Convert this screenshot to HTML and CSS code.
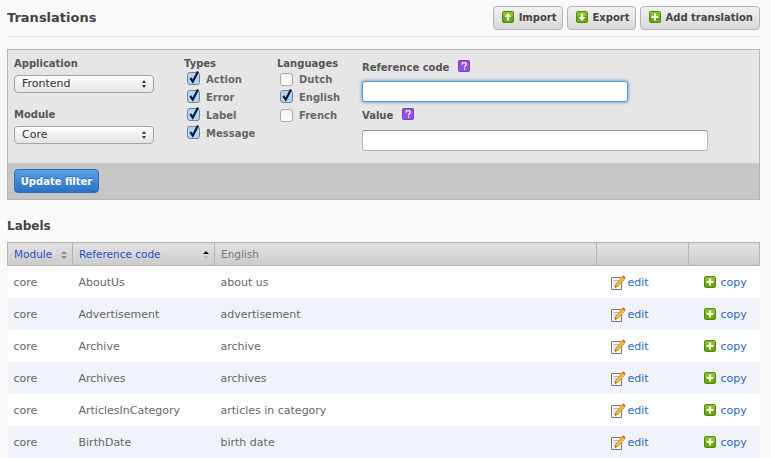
FILE: index.html
```html
<!DOCTYPE html>
<html lang="en">
<head>
  <meta charset="UTF-8">
  <title>Translations</title>
  <link rel="stylesheet" href="styles.css">
</head>
<body>

  <svg class="defs" width="0" height="0">
    <symbol id="green" viewBox="0 0 12 12">
      <rect x="0.5" y="0.5" width="11" height="11" rx="1.5" fill="#67a90f" stroke="#4f8a0a"/>
      <rect x="1" y="1" width="10" height="4" rx="1" fill="#86c523"/>
    </symbol>
    <symbol id="add" viewBox="0 0 12 12">
      <use href="#green" width="12" height="12"/>
      <path d="M5 2.5h2V5h2.5v2H7v2.5H5V7H2.5V5H5z" fill="#fff"/>
    </symbol>
    <symbol id="up" viewBox="0 0 12 12">
      <use href="#green" width="12" height="12"/>
      <path d="M6 2l3.5 3.8H7.2v3.7H4.8V5.800H2.500z" fill="#fff"/>
    </symbol>
    <symbol id="down" viewBox="0 0 12 12">
      <use href="#green" width="12" height="12"/>
      <path d="M6 10L2.500 6.200h2.300V2.500h2.400v3.700h2.300z" fill="#fff"/>
    </symbol>
    <symbol id="help" viewBox="0 0 12 12">
      <rect x="0.5" y="0.5" width="11" height="11" rx="1" fill="#9350dc" stroke="#7a3cc0"/>
      <path d="M4 4.500c0-2.400 4.200-2.400 4.200 0 0 1.500-1.600 1.500-1.600 2.700M6.600 8.300v1.400" fill="none" stroke="#fff" stroke-width="1.300"/>
    </symbol>
    <symbol id="tick" viewBox="0 0 14 15">
      <rect x="0.500" y="2.500" width="12" height="12" rx="2.500" fill="#b4d6f4" stroke="#6d87a3"/>
      <path d="M3.300 8l2.500 3.600L11 1.500" fill="none" stroke="#111d33" stroke-width="2.200"/>
    </symbol>
    <symbol id="pencil" viewBox="0 0 16 16">
      <path d="M1.500 2.500h10v12h-10z" fill="#fbfbfb" stroke="#777"/>
      <path d="M3.500 5.500h6M3.500 8h4M3.500 10.500h3" stroke="#b5b5b5"/>
      <path d="M5 12.500l1-3.500 6.500-7.500 2.500 2L8.500 11z" fill="#f4b73c" stroke="#c47f1a" stroke-width="0.700"/>
      <path d="M12.300 1.500l1-1 2.200 1.800-.8 1.200z" fill="#d5405c"/>
      <path d="M5 12.500l.5-1.800 1.300 1z" fill="#333"/>
    </symbol>
  </svg>

  <div class="page-head">
    <h1>Translations</h1>
    <div class="actions">
      <a class="btn" href="#"><svg class="icon"><use href="#up"/></svg>Import</a>
      <a class="btn" href="#"><svg class="icon"><use href="#down"/></svg>Export</a>
      <a class="btn" href="#"><svg class="icon"><use href="#add"/></svg>Add translation</a>
    </div>
  </div>

  <form class="filter">
    <div class="filter-fields">
      <div class="col-selects">
        <label class="field-title">Application</label>
        <div class="fake-select">Frontend<span class="arrows"></span></div>
        <label class="field-title second">Module</label>
        <div class="fake-select">Core<span class="arrows"></span></div>
      </div>
      <div class="col-types">
        <div class="field-title">Types</div>
        <div class="check"><svg class="box"><use href="#tick"/></svg>Action</div>
        <div class="check"><svg class="box"><use href="#tick"/></svg>Error</div>
        <div class="check"><svg class="box"><use href="#tick"/></svg>Label</div>
        <div class="check"><svg class="box"><use href="#tick"/></svg>Message</div>
      </div>
      <div class="col-langs">
        <div class="field-title">Languages</div>
        <div class="check"><span class="box-empty"></span>Dutch</div>
        <div class="check"><svg class="box"><use href="#tick"/></svg>English</div>
        <div class="check"><span class="box-empty"></span>French</div>
      </div>
      <div class="col-text">
        <label class="field-title">Reference code <svg class="help"><use href="#help"/></svg></label>
        <input class="text focused" type="text">
        <label class="field-title">Value <svg class="help"><use href="#help"/></svg></label>
        <input class="text" type="text">
      </div>
    </div>
    <div class="filter-foot">
      <button class="btn-primary" type="button">Update filter</button>
    </div>
  </form>

  <h2>Labels</h2>

  <table>
    <thead>
      <tr>
        <th class="c-module"><a href="#">Module</a><span class="sort"></span></th>
        <th class="c-ref"><a href="#">Reference code</a><span class="sort asc"></span></th>
        <th class="c-text">English</th>
        <th class="c-edit"></th>
        <th class="c-copy"></th>
      </tr>
    </thead>
    <tbody>
      <tr>
        <td>core</td><td>AboutUs</td><td>about us</td>
        <td><a href="#"><svg class="pencil"><use href="#pencil"/></svg>edit</a></td>
        <td><a href="#"><svg class="icon"><use href="#add"/></svg>copy</a></td>
      </tr>
      <tr>
        <td>core</td><td>Advertisement</td><td>advertisement</td>
        <td><a href="#"><svg class="pencil"><use href="#pencil"/></svg>edit</a></td>
        <td><a href="#"><svg class="icon"><use href="#add"/></svg>copy</a></td>
      </tr>
      <tr>
        <td>core</td><td>Archive</td><td>archive</td>
        <td><a href="#"><svg class="pencil"><use href="#pencil"/></svg>edit</a></td>
        <td><a href="#"><svg class="icon"><use href="#add"/></svg>copy</a></td>
      </tr>
      <tr>
        <td>core</td><td>Archives</td><td>archives</td>
        <td><a href="#"><svg class="pencil"><use href="#pencil"/></svg>edit</a></td>
        <td><a href="#"><svg class="icon"><use href="#add"/></svg>copy</a></td>
      </tr>
      <tr>
        <td>core</td><td>ArticlesInCategory</td><td>articles in category</td>
        <td><a href="#"><svg class="pencil"><use href="#pencil"/></svg>edit</a></td>
        <td><a href="#"><svg class="icon"><use href="#add"/></svg>copy</a></td>
      </tr>
      <tr>
        <td>core</td><td>BirthDate</td><td>birth date</td>
        <td><a href="#"><svg class="pencil"><use href="#pencil"/></svg>edit</a></td>
        <td><a href="#"><svg class="icon"><use href="#add"/></svg>copy</a></td>
      </tr>
    </tbody>
  </table>

</body>
</html>
```

FILE: styles.css
```css
html, body {
  height: 458px;
  overflow: hidden;
}

body {
  margin: 0;
  padding: 0 11px 0 7px;
  background-color: #f9f9f9;
  font-family: "DejaVu Sans", sans-serif;
  font-size: 11px;
  color: #666;
}

a {
  color: #1f6bbd;
  text-decoration: none;
}

.defs {
  position: absolute;
}

.icon {
  width: 12px;
  height: 12px;
  margin-right: 5px;
  vertical-align: -2px;
}

.page-head {
  display: flex;
  justify-content: space-between;
  align-items: center;
  height: 35px;
  border-bottom: 1px solid #dfdfdf;
  padding-bottom: 1px;
  box-sizing: content-box;
}

h1 {
  margin: 0;
  font-size: 13px;
  color: #444;
}

.actions {
  display: flex;
  gap: 4px;
}

.btn {
  display: block;
  height: 22px;
  line-height: 22px;
  padding: 0 6px 0 8px;
  border: 1px solid #b5b5b5;
  border-radius: 4px;
  background: linear-gradient(#f2f2f2, #d8d8d8);
  color: #444;
  font-weight: bold;
  font-size: 10px;
}

.btn:not(:last-child) {
  padding-right: 5px;
}

.filter {
  margin-top: 12px;
  height: 151px;
  box-sizing: border-box;
  border: 1px solid #b5b5b5;
  background-color: #e6e6e6;
  display: flex;
  flex-direction: column;
}

.filter-fields {
  flex: 1;
  display: flex;
  padding: 7px 6px 0;
}

.field-title {
  display: block;
  font-weight: bold;
  color: #555;
  font-size: 10px;
  line-height: 14px;
}

.col-selects {
  width: 170px;
}

.col-selects .second {
  margin-top: 15px;
}

.fake-select {
  position: relative;
  margin-top: 4px;
  width: 131px;
  height: 16px;
  line-height: 16px;
  padding-left: 7px;
  border: 1px solid #a5a5a5;
  border-radius: 4px;
  background: linear-gradient(#fff, #f0f0f0 50%, #e4e4e4);
  color: #333;
}

.arrows {
  position: absolute;
  right: 6px;
  top: 4px;
  width: 5px;
  height: 8px;
}

.arrows::before,
.arrows::after {
  content: "";
  position: absolute;
  left: 0;
  border-left: 2.5px solid transparent;
  border-right: 2.5px solid transparent;
}

.arrows::before {
  top: 0;
  border-bottom: 3px solid #333;
}

.arrows::after {
  bottom: 0;
  border-top: 3px solid #333;
}

.col-types {
  width: 93px;
}

.col-langs {
  width: 85px;
}

.check {
  display: flex;
  align-items: center;
  height: 18px;
  padding-left: 3px;
  font-size: 10px;
  font-weight: bold;
  color: #666;
}

.col-types .field-title,
.col-langs .field-title {
  margin-bottom: -1px;
}

.box {
  width: 14px;
  height: 15px;
  margin: -3px 5px 0 0;
  flex: none;
}

.box-empty {
  width: 11px;
  height: 11px;
  margin-right: 6px;
  flex: none;
  border: 1px solid #a8a8a8;
  border-radius: 3px;
  background: linear-gradient(#f2f2f2, #fff);
}

.col-text {
  width: 346px;
}

.col-text .field-title {
  margin-top: 3px;
}

.help {
  width: 12px;
  height: 12px;
  margin-left: 5px;
  vertical-align: -1px;
}

.text {
  display: block;
  box-sizing: border-box;
  width: 346px;
  height: 21px;
  margin: 7px 0 6px;
  padding: 0 4px;
  border: 1px solid #b5b5b5;
  border-top-color: #8e8e8e;
  border-radius: 3px;
  background: #fff;
}

.text.focused {
  width: 266px;
  margin-top: 6px;
  border: 1px solid #5e97c9;
  box-shadow: 0 0 3px 1px #78b0dc;
}

.filter-foot {
  height: 36px;
  box-sizing: border-box;
  padding: 6px;
  background-color: #c6c6c6;
}

.btn-primary {
  display: block;
  height: 24px;
  width: 85px;
  padding: 0;
  border: 1px solid #2a6db5;
  border-radius: 4px;
  background: linear-gradient(#5aa0e6, #2a72c4);
  color: #fff;
  font-family: inherit;
  font-size: 10px;
  font-weight: bold;
  text-shadow: 0 -1px 0 #2a6db5;
}

h2 {
  margin: 18px 0 8px;
  font-size: 12px;
  line-height: 16px;
  color: #444;
}

table {
  width: 753px;
  table-layout: fixed;
  border-collapse: collapse;
}

th {
  position: relative;
  box-sizing: border-box;
  height: 23px;
  padding: 0 6px;
  text-align: left;
  font-size: 10.5px;
  font-weight: normal;
  border: 1px solid #b5b5b5;
  background: linear-gradient(#e2e2e2, #cbcbcb);
  color: #777;
}

th a {
  color: #2a4fc0;
}

.c-module { width: 65px; }
.c-ref { width: 142px; }
.c-edit { width: 92px; }
.c-copy { width: 71px; }

.sort {
  position: absolute;
  right: 5px;
  top: 8px;
  width: 0;
  height: 0;
  border: 3px solid transparent;
  border-top: 0;
  border-bottom: 3px solid #888;
}

.sort::after {
  content: "";
  position: absolute;
  left: -3px;
  top: 5px;
  border: 3px solid transparent;
  border-bottom: 0;
  border-top: 3px solid #888;
}

.sort.asc {
  border-bottom-color: #111;
}

.sort.asc::after {
  border-top-color: #bbb;
}

td {
  height: 32px;
  box-sizing: border-box;
  padding: 2px 6px 0;
  background-color: #fff;
}

td:nth-child(4) {
  padding-left: 13px;
}

td:nth-child(5) {
  padding-left: 15px;
}

tr:nth-child(even) td {
  background-color: #f0f3f9;
}

.pencil {
  width: 16px;
  height: 16px;
  margin: -4px 2px -4px 0;
  vertical-align: -1px;
}
```
